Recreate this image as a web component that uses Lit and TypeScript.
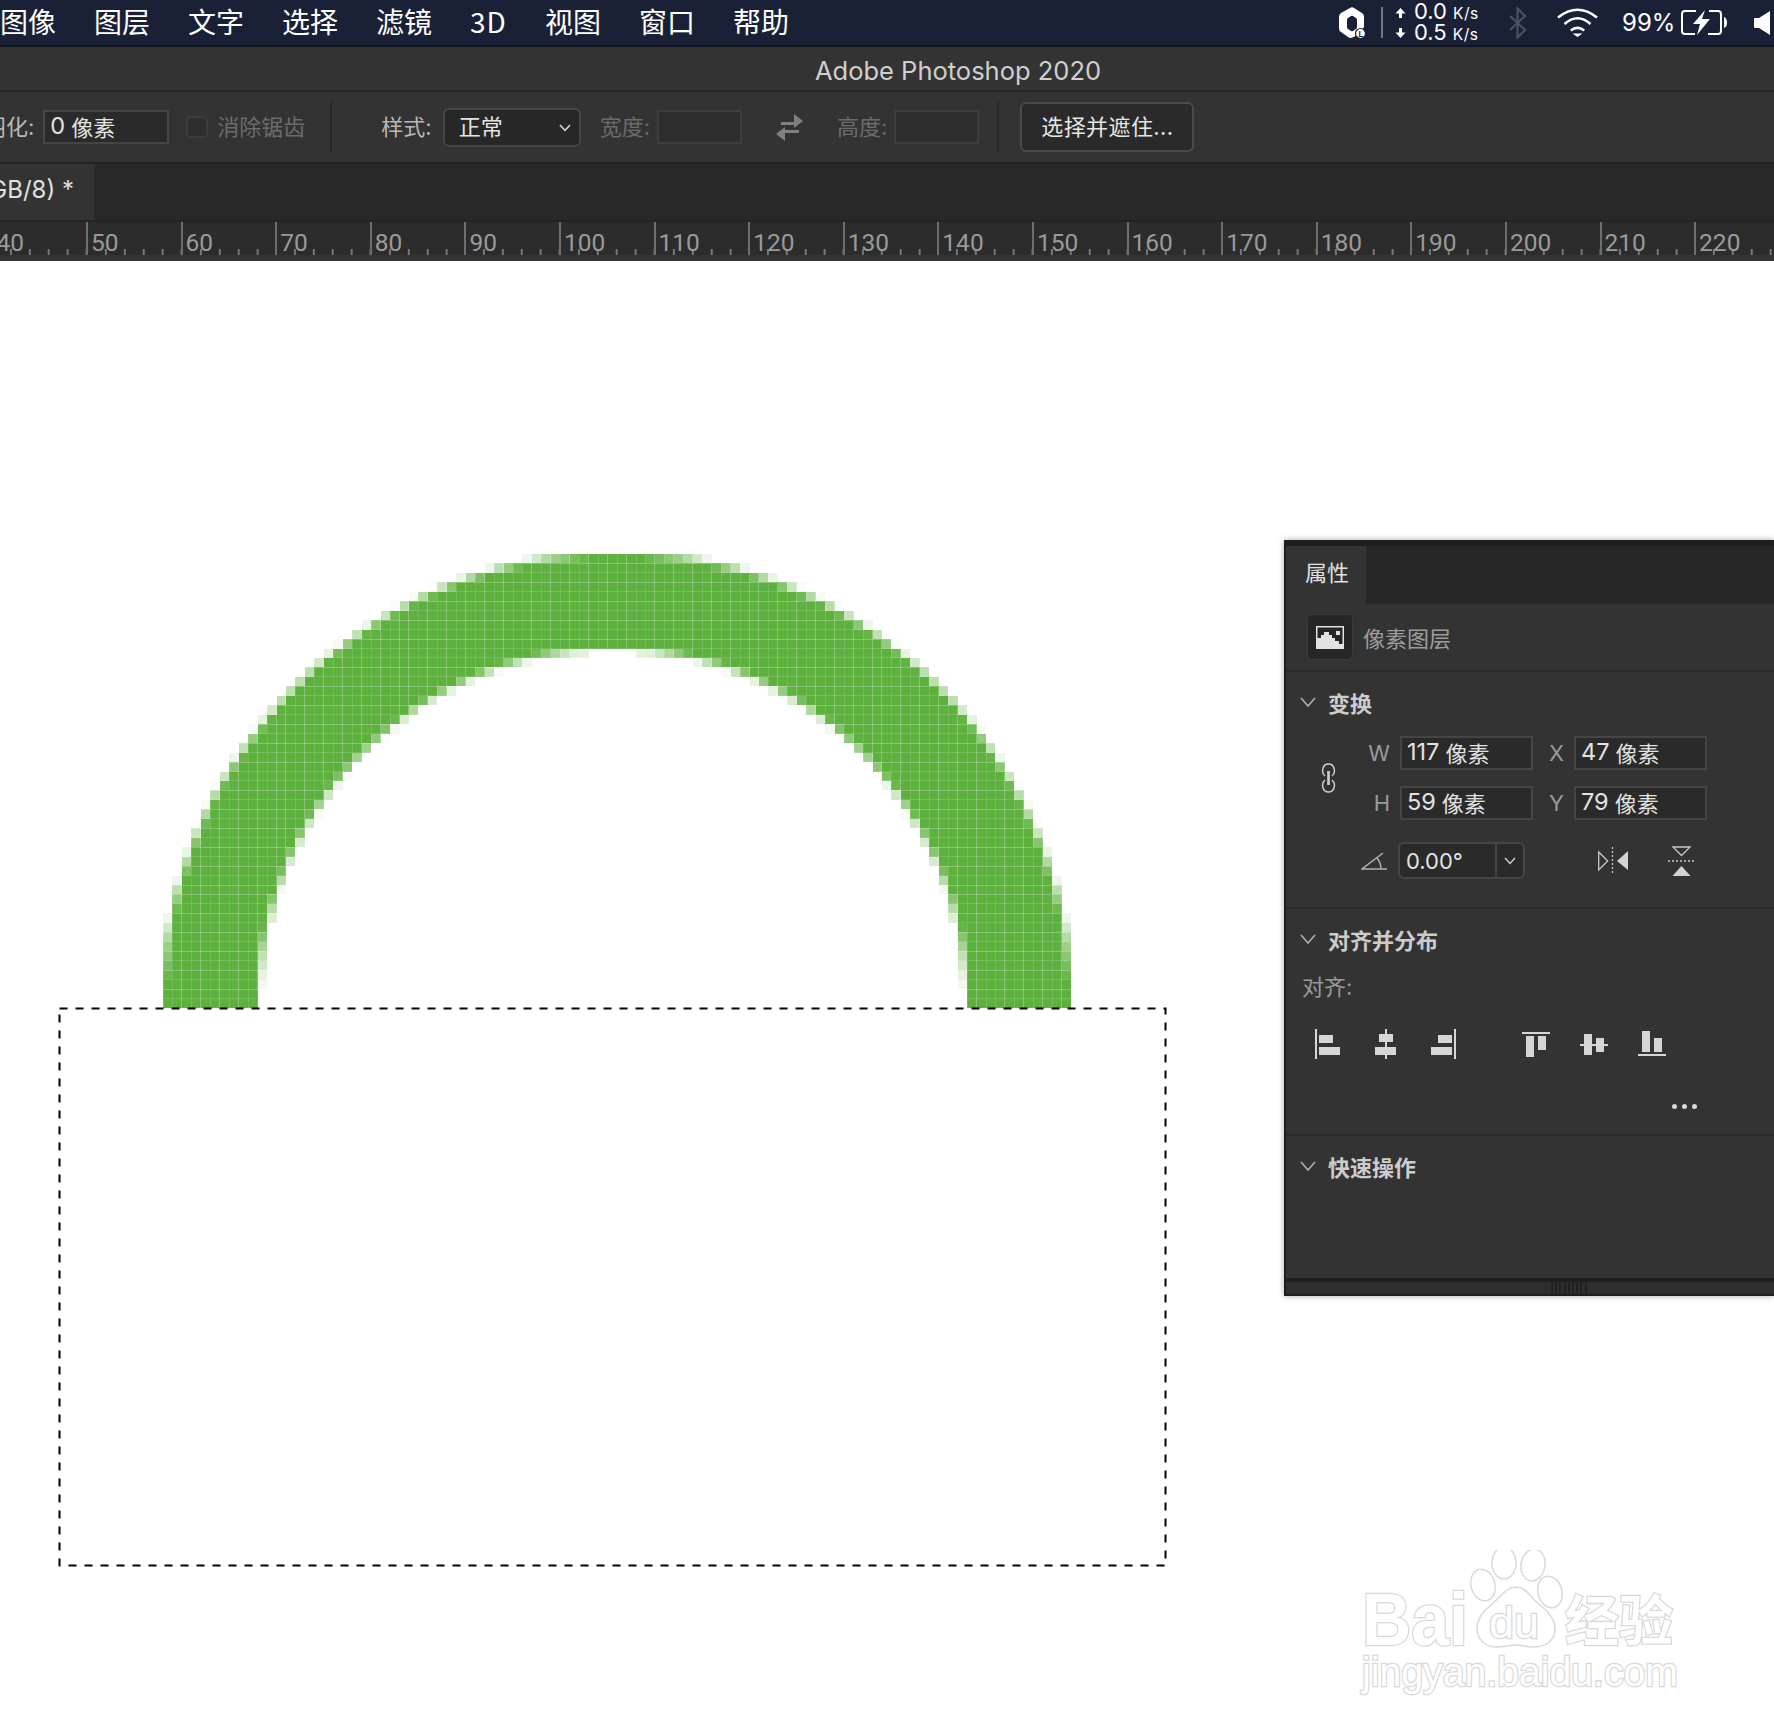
import { LitElement, css, html, svg } from "lit";
import { customElement } from "lit/decorators.js";

const STEP = 9.46;
const BOTTOM = 747; // 1008 minus the height of the chrome
const LEFT = 163;

// how much of one document pixel the ring covers, 0..1
function coverage(col: number, row: number) {
  let hits = 0;
  for (let i = 0; i < 6; i++) {
    for (let j = 0; j < 6; j++) {
      const x = col + (i + 0.5) / 6;
      const h = row + (j + 0.5) / 6;
      const outer = (x - 48) ** 2 + h ** 2 <= 48.05 ** 2;
      const inner = (x - 47.5) ** 2 + (h * 37.5 / 38) ** 2 < 37.5 ** 2;
      if (outer && !inner) hits++;
    }
  }
  return hits / 36;
}

const ringCells: { x: number; y: number; a: number }[] = [];
for (let col = 0; col < 96; col++) {
  for (let row = 0; row < 49; row++) {
    const a = coverage(col, row);
    if (a > 0) ringCells.push({ x: LEFT + col * STEP, y: BOTTOM - (row + 1) * STEP, a });
  }
}

const MENU = ["图像", "图层", "文字", "选择", "滤镜", "3D", "视图", "窗口", "帮助"];
const RULER = Array.from({ length: 19 }, (_, i) => 40 + i * 10);

const chevron = html`<svg class="sec-chev" width="16" height="10" viewBox="0 0 16 10"><path d="M1 1l7 8 7-8" fill="none" stroke="#b0b0b0" stroke-width="1.6"/></svg>`;

@customElement("app-root")
export class AppRoot extends LitElement {
  static styles = css`
    :host {
      display: block;
      position: relative;
      width: 1774px;
      height: 1736px;
      overflow: hidden;
      background: #fff;
      font-family: Inter, "Noto Sans CJK SC", sans-serif;
      font-size: 22px;
    }
    .menubar {
      height: 45px;
      border-bottom: 2px solid #10151f;
      background: #1a2137;
      display: flex;
      align-items: center;
      color: #fff;
    }
    .menu-items {
      display: flex;
      gap: 38px;
      font-size: 28px;
      line-height: 43px;
      height: 45px;
      font-family: "Noto Sans CJK SC", sans-serif;
      white-space: nowrap;
    }
    .menu-items .latin {
      letter-spacing: 1px;
    }
    .status {
      margin-left: auto;
      display: flex;
      align-items: center;
      height: 45px;
    }
    .status svg {
      display: block;
      flex: none;
    }
    .sep {
      width: 2px;
      height: 31px;
      background: #737887;
      margin-left: 15px;
    }
    .arrows {
      margin-left: 12px;
    }
    .speed {
      margin-left: 8px;
      font-size: 22px;
      line-height: 19px;
      width: 64px;
    }
    .speed span {
      font-size: 15.5px;
      margin-left: 6px;
      letter-spacing: 0.5px;
    }
    .bt {
      margin-left: 31px;
    }
    .wifi {
      margin-left: 30px;
    }
    .pct {
      margin-left: 24px;
      font-size: 24px;
      width: 58px;
    }
    .batt {
      margin-left: 1px;
    }
    .spk {
      margin-left: 26px;
      margin-right: 4px;
    }
    .titlebar {
      height: 43px;
      border-bottom: 2px solid #262626;
      background: #333;
      color: #cfcfcf;
      font-size: 25.5px;
      line-height: 47px;
      text-align: center;
      padding-left: 142px;
    }
    .options {
      height: 70px;
      border-bottom: 2px solid #232323;
      background: #333;
      display: flex;
      align-items: center;
      color: #b8b8b8;
      white-space: nowrap;
    }
    .options > span {
      padding-bottom: 4px;
    }
    .clip-label {
      margin-left: -16px;
    }
    .field {
      box-sizing: border-box;
      height: 34px;
      border: 2px solid #454545;
      background: #2a2a2a;
      color: #e2e2e2;
      display: flex;
      align-items: center;
      padding: 0 0 3px 5px;
    }
    .n {
      font-size: 23.5px;
      margin-right: 6px;
    }
    .field.feather {
      width: 126px;
      margin-left: 9px;
    }
    .field.off {
      width: 85px;
      background: #2d2d2d;
      border-color: #3d3d3d;
      margin-left: 7px;
    }
    .check {
      box-sizing: border-box;
      width: 22px;
      height: 22px;
      margin-left: 17px;
      border: 2px solid #3c3c3c;
      border-radius: 5px;
      background: #2e2e2e;
    }
    .dim {
      color: #6b6b6b;
    }
    .aa {
      margin-left: 9px;
    }
    .vline {
      width: 2px;
      height: 50px;
      background: #272727;
    }
    .vline.a {
      margin-left: 25px;
    }
    .vline.b {
      margin-left: 18px;
    }
    .options > .style-label {
      margin-left: 49px;
    }
    .select {
      box-sizing: border-box;
      width: 138px;
      height: 39px;
      margin-left: 11px;
      border: 2px solid #464646;
      border-radius: 6px;
      background: #272727;
      color: #e4e4e4;
      display: flex;
      align-items: center;
      justify-content: space-between;
      padding: 0 8px 0 14px;
    }
    .select span {
      padding-bottom: 4px;
    }
    .select svg {
      margin-top: 2px;
    }
    .options > .w-label {
      margin-left: 19px;
    }
    .swap {
      margin: 0 34px;
      flex: none;
    }
    .refine {
      box-sizing: border-box;
      width: 174px;
      height: 50px;
      margin-left: 21px;
      padding-bottom: 4px;
      border: 2px solid #4a4a4a;
      border-radius: 6px;
      background: #2a2a2a;
      color: #e6e6e6;
      letter-spacing: 0.4px;
      display: flex;
      align-items: center;
      justify-content: center;
    }
    .tabbar {
      height: 56px;
      border-bottom: 2px solid #232323;
      background: #282828;
    }
    .doc-tab {
      box-sizing: border-box;
      width: 94px;
      height: 56px;
      background: #333;
      color: #e0e0e0;
      font-size: 24px;
      line-height: 52px;
      padding-right: 20px;
      display: flex;
      justify-content: flex-end;
      overflow: hidden;
      white-space: nowrap;
    }
    .ruler {
      height: 33px;
      border-bottom: 6px solid #333;
      background: #2c2c2c;
      display: flex;
      overflow: hidden;
    }
    .ruler-seg {
      box-sizing: border-box;
      flex: 0 0 94.6px;
      height: 33px;
      border-left: 2px solid #6e6e6e;
      padding: 8px 0 0 3px;
      color: #9a9a9a;
      font: 24.5px/26px Roboto, sans-serif;
      background: linear-gradient(to right, #777 2px, transparent 2px) -2px 100% / 18.92px 6px repeat-x;
    }
    .ruler-seg:first-child {
      margin-left: -8.6px;
    }
    .canvas {
      display: block;
      position: absolute;
      left: 0;
      top: 261px;
    }
    .panel {
      box-sizing: border-box;
      position: absolute;
      left: 1284px;
      right: 0;
      top: 540px;
      height: 756px;
      border: 2px solid #1e1e1e;
      border-top-width: 6px;
      border-right: 0;
      background: #333;
      box-shadow: 0 0 6px rgba(0, 0, 0, 0.35);
      display: flex;
      flex-direction: column;
      color: #d2d2d2;
    }
    .panel-tabs {
      flex: none;
      height: 58px;
      background: #272727;
    }
    .panel-tab {
      box-sizing: border-box;
      width: 80px;
      height: 58px;
      background: #333;
      padding-left: 19px;
      line-height: 54px;
      color: #e0e0e0;
    }
    .layer-row {
      box-sizing: border-box;
      flex: none;
      height: 68px;
      border-bottom: 2px solid #2a2a2a;
      display: flex;
      align-items: center;
      padding-left: 21px;
      color: #9c9c9c;
    }
    .layer-icon {
      box-sizing: border-box;
      width: 46px;
      height: 46px;
      margin-right: 10px;
      border: 1px solid #3b3b3b;
      border-radius: 5px;
      background: #262626;
      display: flex;
      align-items: center;
      justify-content: center;
    }
    .sec-head {
      box-sizing: border-box;
      height: 63px;
      display: flex;
      align-items: center;
      padding: 0 0 3px 14px;
      font-weight: 700;
      color: #cccccc;
    }
    .sec-chev {
      margin-right: 12px;
      flex: none;
    }
    .transform {
      box-sizing: border-box;
      flex: none;
      height: 237px;
      border-bottom: 2px solid #2a2a2a;
    }
    .grid {
      margin-top: 1px;
      display: grid;
      grid-template-columns: 74px 30px 143px 31px 143px;
      grid-auto-rows: 34px;
      row-gap: 16px;
      align-items: center;
    }
    .link {
      grid-row: span 2;
      padding-left: 35px;
    }
    .link svg {
      display: block;
    }
    .lab {
      text-align: right;
      color: #9a9a9a;
      font-size: 22px;
    }
    .grid .field {
      width: 133px;
      margin-left: 10px;
    }
    .angle-row {
      margin-top: 22px;
      display: flex;
      align-items: center;
    }
    .angle-icon {
      margin-left: 75px;
      flex: none;
    }
    .angle {
      box-sizing: border-box;
      width: 127px;
      height: 37px;
      margin-left: 11px;
      border: 2px solid #454545;
      border-radius: 6px;
      background: #2a2a2a;
      color: #e2e2e2;
      display: flex;
      align-items: center;
    }
    .angle-val {
      flex: 1;
      padding-left: 6px;
    }
    .angle-btn {
      width: 26px;
      height: 33px;
      border-left: 2px solid #454545;
      display: flex;
      align-items: center;
      justify-content: center;
    }
    .flip-h {
      margin-left: 73px;
      flex: none;
    }
    .flip-v {
      margin-left: 40px;
      flex: none;
    }
    .distribute {
      box-sizing: border-box;
      flex: none;
      height: 227px;
      border-bottom: 2px solid #2a2a2a;
      display: flex;
      flex-direction: column;
    }
    .align-label {
      height: 30px;
      line-height: 30px;
      padding-left: 16px;
      color: #9a9a9a;
    }
    .align-row {
      margin-top: 27px;
      padding-left: 29px;
      display: flex;
      height: 30px;
    }
    .align-group {
      display: flex;
      gap: 35px;
    }
    .align-group + .align-group {
      margin-left: 66px;
      gap: 30px;
    }
    .dots {
      margin-top: 45px;
      padding-right: 77px;
      display: flex;
      justify-content: flex-end;
      gap: 5px;
    }
    .dots i {
      width: 5px;
      height: 5px;
      border-radius: 50%;
      background: #d8d8d8;
    }
    .quick {
      flex: 1;
    }
    .panel-foot {
      flex: none;
      height: 12px;
      border-top: 4px solid #1f1f1f;
      background: #2e2e2e;
      display: flex;
      justify-content: center;
      padding-left: 80px;
    }
    .grip {
      width: 38px;
      height: 12px;
      background: repeating-linear-gradient(to right, #222 0 2px, transparent 2px 4.2px);
    }
    .wm {
      position: absolute;
      left: 1350px;
      top: 1550px;
    }
    .wm text {
      fill: #fff;
      stroke: #d9d9d9;
      stroke-width: 2.6px;
      paint-order: stroke;
    }
    .wm .latin {
      font-family: "Liberation Sans", sans-serif;
    }
    .wm .cjk {
      font-family: "Noto Sans CJK SC", sans-serif;
      font-weight: 700;
    }
  `;

  private statusArea() {
    return html`<div class="status">
      <svg width="27" height="32" viewBox="0 0 27 32">
        <path fill="#fff" fill-rule="evenodd" d="M11 1q2-1.500 4 0l8 5q2 1 2 4v10l-6 8-7 3q-2 0-3-1l-7-5q-2-1-2-4V10q0-3 2-4zM9 11q-1 .5-1 2v7q0 1.500 1 2l3 2q1 .5 2 0l3-2q1-.5 1-2v-7q0-1.500-1-2l-3-2q-1-.5-2 0z"/>
        <circle cx="21.500" cy="26.500" r="5" fill="#fff" stroke="#1a2137" stroke-width="1.200"/>
        <text x="19.500" y="29.500" font-size="8" font-weight="700" fill="#1a2137">L</text>
      </svg>
      <div class="sep"></div>
      <svg class="arrows" width="11" height="30" viewBox="0 0 11 30">
        <path fill="#fff" d="M5.500 0l5 5.500H7v4.500H4V5.500H.5zM4 20h3v4.500h3.500l-5 5.500-5-5.500H4z"/>
      </svg>
      <div class="speed">0.0<span>K/s</span><br />0.5<span>K/s</span></div>
      <svg class="bt" width="18" height="32" viewBox="0 0 18 32">
        <path fill="none" stroke="#4b5061" stroke-width="2.200" d="M1 9l15 14-7.500 7.500V1.500L16 9 1 23"/>
      </svg>
      <svg class="wifi" width="41" height="29" viewBox="0 0 41 29">
        <path fill="none" stroke="#fff" stroke-width="2.600" d="M1 9.500Q20.500-6 40 9.500M7.500 16Q20.500 4.500 33.500 16"/>
        <path fill="#fff" d="M13 21.500q7.500-6 15 0l-1.500 2q-6-4.500-12 0zM15.500 25.500h10l-5 3.500z"/>
      </svg>
      <div class="pct">99%</div>
      <svg class="batt" width="47" height="25" viewBox="0 0 47 25">
        <path fill="none" stroke="#fff" stroke-width="2" d="M15 1H4Q1 1 1 4v17q0 3 3 3h10M27 24h10q3 0 3-3V4q0-3-3-3h-9"/>
        <path fill="#fff" d="M24 0L12 14h7l-3 11 13-16h-8zM43 7q3 1 3 5.500T43 18z"/>
      </svg>
      <svg class="spk" width="16" height="24" viewBox="0 0 16 24"><path fill="#fff" d="M1 7h4L16 0v24L5 17H1q-1 0-1-1V8q0-1 1-1z"/></svg>
    </div>`;
  }

  private optionsBar() {
    return html`<div class="options">
      <span class="clip-label">羽化:</span>
      <div class="field feather"><span class="n">0</span>像素</div>
      <div class="check"></div>
      <span class="dim aa">消除锯齿</span>
      <div class="vline a"></div>
      <span class="style-label">样式:</span>
      <div class="select">
        <span>正常</span>
        <svg width="12" height="8" viewBox="0 0 12 8"><path d="M1 1l5 5.500L11 1" fill="none" stroke="#ddd" stroke-width="1.500"/></svg>
      </div>
      <span class="dim w-label">宽度:</span>
      <div class="field off"></div>
      <svg class="swap" width="27" height="27" viewBox="0 0 27 27">
        <path fill="#808080" d="M5 8h13V0l9 7-9 7v-3H5zM9 13v3h14v3H9v8L0 20z"/>
      </svg>
      <span class="dim">高度:</span>
      <div class="field off"></div>
      <div class="vline b"></div>
      <div class="refine">选择并遮住...</div>
    </div>`;
  }

  private alignIcons() {
    const bars = (w: number, rects: number[][]) =>
      html`<svg width=${w} height="30" viewBox="0 0 ${w} 30">${rects.map(
        ([x, y, rw, rh]) => svg`<rect x=${x} y=${y} width=${rw} height=${rh} fill="#d6d6d6"/>`
      )}</svg>`;
    return html`<div class="align-row">
      <div class="align-group">
        ${bars(25, [[0, 0, 2, 30], [4, 6, 14, 8], [4, 18, 21, 8]])}
        ${bars(21, [[10, 0, 2, 30], [4, 5, 14, 8], [0, 18, 21, 8]])}
        ${bars(25, [[23, 0, 2, 30], [7, 6, 14, 8], [0, 18, 21, 8]])}
      </div>
      <div class="align-group">
        ${bars(28, [[0, 3, 28, 2], [4, 7, 8, 21], [16, 7, 8, 14]])}
        ${bars(28, [[0, 15, 28, 2], [4, 5, 8, 21], [16, 9, 8, 14]])}
        ${bars(28, [[0, 25, 28, 2], [4, 2, 8, 21], [16, 9, 8, 14]])}
      </div>
    </div>`;
  }

  private propertiesPanel() {
    return html`<div class="panel">
      <div class="panel-tabs"><div class="panel-tab">属性</div></div>
      <div class="layer-row">
        <div class="layer-icon">
          <svg width="28" height="23" viewBox="0 0 28 23">
            <path fill="#e2e2e2" fill-rule="evenodd" d="M0 0h28v23H0zM1.500 1.500v20h25v-20z"/>
            <path fill="#e2e2e2" d="M0 23v-11h5V9h3V6h5v3h3v3h3v3h4v3h5v5zM20 5h4v4h-4z"/>
          </svg>
        </div>
        像素图层
      </div>
      <div class="transform">
        <div class="sec-head">${chevron}变换</div>
        <div class="grid">
          <div class="link">
            <svg width="15" height="30" viewBox="0 0 15 30">
              <path fill="none" stroke="#d0d0d0" stroke-width="1.500" d="M4 13C0 10 1 1 7.500 1S15 10 11 13M4 17C0 20 1 29 7.500 29S15 20 11 17"/>
              <path stroke="#d0d0d0" stroke-width="2.600" d="M7.500 8v14"/>
            </svg>
          </div>
          <div class="lab">W</div>
          <div class="field"><span class="n">117</span>像素</div>
          <div class="lab">X</div>
          <div class="field"><span class="n">47</span>像素</div>
          <div class="lab">H</div>
          <div class="field"><span class="n">59</span>像素</div>
          <div class="lab">Y</div>
          <div class="field"><span class="n">79</span>像素</div>
        </div>
        <div class="angle-row">
          <svg class="angle-icon" width="26" height="18" viewBox="0 0 26 18">
            <path fill="none" stroke="#b0b0b0" stroke-width="1.500" d="M26 17H1L22 1M16 6q4 5 4 11"/>
          </svg>
          <div class="angle">
            <div class="angle-val">0.00°</div>
            <div class="angle-btn">
              <svg width="12" height="8" viewBox="0 0 12 8"><path d="M1 1l5 5.500L11 1" fill="none" stroke="#ccc" stroke-width="1.500"/></svg>
            </div>
          </div>
          <svg class="flip-h" width="30" height="28" viewBox="0 0 30 28">
            <path fill="none" stroke="#c8c8c8" stroke-width="1.300" d="M.7 5l9 9-9 9z"/>
            <path stroke="#c8c8c8" stroke-width="1.300" stroke-dasharray="2 2" d="M14.500 0v28"/>
            <path fill="#d4d4d4" d="M19 14l11-10v19z"/>
          </svg>
          <svg class="flip-v" width="26" height="30" viewBox="0 0 26 30">
            <path fill="none" stroke="#c8c8c8" stroke-width="1.300" d="M5 1h17l-8.500 8.500z"/>
            <path stroke="#c8c8c8" stroke-width="1.300" stroke-dasharray="2 2" d="M0 15h26"/>
            <path fill="#d4d4d4" d="M13.500 20l9 10H4.500z"/>
          </svg>
        </div>
      </div>
      <div class="distribute">
        <div class="sec-head">${chevron}对齐并分布</div>
        <div class="align-label">对齐:</div>
        ${this.alignIcons()}
        <div class="dots"><i></i><i></i><i></i></div>
      </div>
      <div class="quick">
        <div class="sec-head">${chevron}快速操作</div>
      </div>
      <div class="panel-foot"><div class="grip"></div></div>
    </div>`;
  }

  render() {
    return html`
      <div class="menubar">
        <div class="menu-items">${MENU.map((m) => html`<span class=${m === "3D" ? "latin" : ""}>${m}</span>`)}</div>
        ${this.statusArea()}
      </div>
      <div class="titlebar">Adobe Photoshop 2020</div>
      ${this.optionsBar()}
      <div class="tabbar"><div class="doc-tab">(RGB/8) *</div></div>
      <div class="ruler">${RULER.map((n) => html`<div class="ruler-seg">${n}</div>`)}</div>

      <svg class="canvas" width="1774" height="1475" viewBox="0 0 1774 1475">
        ${ringCells.map(
          (c) => svg`<rect x=${c.x} y=${c.y} width=${STEP} height=${STEP} fill="#5eb13e" fill-opacity=${c.a} stroke="#fff" stroke-opacity="0.14" shape-rendering="crispEdges"/>`
        )}
        <rect x="59.500" y="747.500" width="1106" height="557" fill="none" stroke="#000" stroke-width="2" stroke-dasharray="8 8"/>
      </svg>

      ${this.propertiesPanel()}

      <svg class="wm" width="340" height="160" viewBox="0 0 340 160">
        <text class="latin" x="12" y="95" font-size="74" font-weight="700" textLength="106" lengthAdjust="spacingAndGlyphs">Bai</text>
        <g fill="#fff" stroke="#d9d9d9" stroke-width="1.500">
          <ellipse cx="133" cy="35" rx="12" ry="16" transform="rotate(-15 133 35)"/>
          <ellipse cx="154" cy="13" rx="12" ry="16"/>
          <ellipse cx="183" cy="15" rx="12" ry="16" transform="rotate(10 183 15)"/>
          <ellipse cx="200" cy="42" rx="12" ry="16" transform="rotate(-15 200 42)"/>
          <path d="M166 37c10 0 14 10 24 18 8 6 15 13 15 24 0 12-10 18-21 18-7 0-12-2-18-2s-12 2-19 2c-10 0-20-6-20-18 0-10 6-18 14-24 10-8 15-18 25-18z"/>
        </g>
        <text class="latin" x="139" y="88" font-size="44" textLength="50" lengthAdjust="spacingAndGlyphs">du</text>
        <text class="cjk" x="215" y="91" font-size="54">经验</text>
        <text class="latin" x="12" y="136" font-size="40" textLength="316" lengthAdjust="spacingAndGlyphs">jingyan.baidu.com</text>
      </svg>
    `;
  }
}
